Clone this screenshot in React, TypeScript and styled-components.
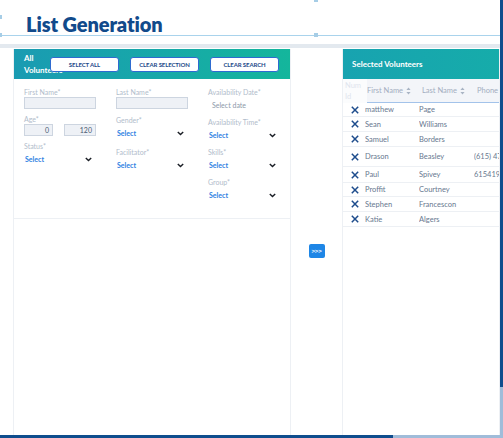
import styled, { createGlobalStyle } from 'styled-components';

const GlobalStyle = createGlobalStyle`
  html, body {
    margin: 0;
    padding: 0;
    overflow: hidden;
    background: #ffffff;
  }
  body {
    font-family: Lato, "Open Sans", sans-serif;
  }
  * {
    box-sizing: border-box;
  }
`;

type Volunteer = { first: string; last: string; phone?: string; h?: number };

const volunteers: Volunteer[] = [
  { first: 'matthew', last: 'Page', h: 14 },
  { first: 'Sean', last: 'Williams' },
  { first: 'Samuel', last: 'Borders' },
  { first: 'Drason', last: 'Beasley', phone: '(615) 477-0192', h: 20 },
  { first: 'Paul', last: 'Spivey', phone: '6154191044', h: 16 },
  { first: 'Proffit', last: 'Courtney', h: 14 },
  { first: 'Stephen', last: 'Francescon' },
  { first: 'Katie', last: 'Algers' },
];

const Chevron = () => (
  <svg width="7" height="5" viewBox="0 0 7 5">
    <path d="M0.8 0.9 L3.5 3.6 L6.2 0.9" fill="none" stroke="#1b1f26" strokeWidth="1.4" />
  </svg>
);

const SortIcon = () => (
  <svg width="5" height="8" viewBox="0 0 5 8">
    <path d="M2.5 0.5 L4.6 3 H0.4 Z M2.5 7.5 L4.6 5 H0.4 Z" fill="#a9b4c4" />
  </svg>
);

const RemoveIcon = () => (
  <svg width="8" height="8" viewBox="0 0 8 8">
    <path d="M0.8 0.8 L7.2 7.2 M7.2 0.8 L0.8 7.2" stroke="#1d4c8c" strokeWidth="1.5" />
  </svg>
);

export default function App() {
  return (
    <>
      <GlobalStyle />
      <Page>
        <TitleBar>
          <Title>List Generation</Title>
          <GuideLine />
          <Handle $x={-2} $y={15} />
          <Handle $x={-2} $y={33} />
          <Handle $x={314} $y={-2} />
          <Handle $x={314} $y={33} />
        </TitleBar>
        <Band />
        <Main>
          <span />
          <Panel>
            <PanelHeader $variant="left">
              <HeaderTitle $narrow>All Volunteers</HeaderTitle>
              <ButtonRow>
                <HeaderButton>Select all</HeaderButton>
                <HeaderButton>Clear selection</HeaderButton>
                <HeaderButton>Clear search</HeaderButton>
              </ButtonRow>
            </PanelHeader>
            <FormGrid>
              <Column $gap={5}>
                <Field>
                  <Label>First Name*</Label>
                  <TextInput />
                </Field>
                <Field>
                  <Label>Age*</Label>
                  <AgeRow>
                    <AgeInput $w={29}>0</AgeInput>
                    <AgeInput $w={32}>120</AgeInput>
                  </AgeRow>
                </Field>
                <Field>
                  <Label>Status*</Label>
                  <SelectBox>
                    <SelectText>Select</SelectText>
                    <Chevron />
                  </SelectBox>
                </Field>
              </Column>
              <Column $gap={6}>
                <Field>
                  <Label>Last Name*</Label>
                  <TextInput />
                </Field>
                <Field>
                  <Label>Gender*</Label>
                  <SelectBox>
                    <SelectText>Select</SelectText>
                    <Chevron />
                  </SelectBox>
                </Field>
                <Field>
                  <Label>Facilitator*</Label>
                  <SelectBox>
                    <SelectText>Select</SelectText>
                    <Chevron />
                  </SelectBox>
                </Field>
              </Column>
              <Column $gap={4}>
                <Field>
                  <Label>Availability Date*</Label>
                  <DateBox>Select date</DateBox>
                </Field>
                {['Availability Time*', 'Skills*', 'Group*'].map(label => (
                  <Field key={label}>
                    <Label>{label}</Label>
                    <SelectBox>
                      <SelectText>Select</SelectText>
                      <Chevron />
                    </SelectBox>
                  </Field>
                ))}
              </Column>
            </FormGrid>
          </Panel>
          <Gutter>
            <MoveButton>&gt;&gt;&gt;</MoveButton>
          </Gutter>
          <Panel>
            <PanelHeader $variant="right">
              <HeaderTitle>Selected Volunteers</HeaderTitle>
            </PanelHeader>
            <TableHead>
              <NumIdCell>
                Num
                <br />
                Id
              </NumIdCell>
              <HeadCell>
                First Name <SortIcon />
              </HeadCell>
              <HeadCell>
                Last Name <SortIcon />
              </HeadCell>
              <HeadCell>Phone</HeadCell>
            </TableHead>
            {volunteers.map(v => (
              <Row key={v.first} $h={v.h ?? 15}>
                <IconCell>
                  <RemoveIcon />
                </IconCell>
                <Cell>{v.first}</Cell>
                <Cell>{v.last}</Cell>
                <Cell>{v.phone ?? ''}</Cell>
              </Row>
            ))}
          </Panel>
        </Main>
        <VScroll />
        <HScroll />
      </Page>
    </>
  );
}

const Page = styled.div`
  position: relative;
  width: 503px;
  height: 438px;
  overflow: hidden;
  display: flex;
  flex-direction: column;
  background: #ffffff;
`;

const TitleBar = styled.header`
  position: relative;
  height: 44px;
  padding: 12px 0 0 26px;
`;

const Title = styled.h1`
  margin: 0;
  font-size: 20px;
  line-height: 24px;
  font-weight: 800;
  color: #114a8b;
  letter-spacing: -0.1px;
`;

const GuideLine = styled.div`
  position: absolute;
  left: 0;
  top: 35px;
  width: 500px;
  height: 1px;
  background: #a9d3ec;
`;

const Handle = styled.div<{ $x: number; $y: number }>`
  position: absolute;
  left: ${({ $x }) => $x}px;
  top: ${({ $y }) => $y}px;
  width: 4px;
  height: 4px;
  background: #a6cde6;
`;

const Band = styled.div`
  height: 4px;
  background: #e3e9ef;
`;

const Main = styled.div`
  flex: 1;
  display: grid;
  grid-template-columns: 13px 278px 51px 158px;
  padding-top: 1px;
`;

const Panel = styled.section`
  display: flex;
  flex-direction: column;
  border-left: 1px solid #edf0f4;
  border-right: 1px solid #edf0f4;
  overflow: hidden;
  padding-bottom: 3px;
`;

const PanelHeader = styled.div<{ $variant: 'left' | 'right' }>`
  flex: none;
  height: 30px;
  display: flex;
  align-items: center;
  padding-left: ${({ $variant }) => ($variant === 'left' ? '10px' : '9px')};
  background: ${({ $variant }) =>
    $variant === 'left'
      ? 'linear-gradient(90deg, #1a9bb2 0%, #17a9a8 55%, #14b69c 100%)'
      : 'linear-gradient(90deg, #18a3b0 0%, #16acaa 100%)'};
`;

const HeaderTitle = styled.div<{ $narrow?: boolean }>`
  width: ${({ $narrow }) => ($narrow ? '26px' : 'auto')};
  font-size: 8px;
  line-height: 12px;
  font-weight: 700;
  color: #ffffff;
  white-space: ${({ $narrow }) => ($narrow ? 'normal' : 'nowrap')};
`;

const ButtonRow = styled.div`
  display: flex;
  gap: 11px;
  position: relative;
  z-index: 1;
`;

const HeaderButton = styled.button`
  width: 69px;
  height: 15px;
  padding: 0;
  background: #ffffff;
  border: 1.5px solid #2e6bd0;
  border-radius: 3px;
  font-family: Lato, "Open Sans", sans-serif;
  font-size: 6px;
  font-weight: 700;
  text-transform: uppercase;
  color: #1c4a8a;
  letter-spacing: -0.1px;
`;

const FormGrid = styled.div`
  flex: none;
  height: 140px;
  display: grid;
  grid-template-columns: 92px 92px 1fr;
  align-items: start;
  padding: 8px 0 0 10px;
  border-bottom: 1px solid #edf0f4;
`;

const Column = styled.div<{ $gap: number }>`
  display: flex;
  flex-direction: column;
  gap: ${({ $gap }) => $gap}px;
`;

const Field = styled.div`
  display: flex;
  flex-direction: column;
`;

const Label = styled.div`
  height: 10px;
  font-size: 7px;
  line-height: 10px;
  color: #b1bccb;
`;

const TextInput = styled.div`
  width: 72px;
  height: 12px;
  background: #eef1f6;
  border: 1px solid #cdd5e0;
`;

const AgeRow = styled.div`
  display: flex;
  gap: 11px;
`;

const AgeInput = styled.div<{ $w: number }>`
  width: ${({ $w }) => $w}px;
  height: 12px;
  padding-right: 3px;
  background: #eef1f6;
  border: 1px solid #cdd5e0;
  font-size: 7px;
  line-height: 10px;
  text-align: right;
  color: #4a5a72;
`;

const SelectBox = styled.div`
  width: 68px;
  height: 16px;
  display: flex;
  align-items: center;
  justify-content: space-between;
  padding-left: 1px;
`;

const SelectText = styled.span`
  font-size: 7px;
  font-weight: 700;
  color: #2e7fe2;
`;

const DateBox = styled.div`
  height: 16px;
  padding-left: 4px;
  display: flex;
  align-items: center;
  font-size: 7px;
  color: #8d99aa;
`;

const Gutter = styled.div`
  display: flex;
  justify-content: center;
  padding-top: 195px;
`;

const MoveButton = styled.button`
  width: 16px;
  height: 14px;
  padding: 0;
  border: none;
  border-radius: 2px;
  background: #1e86e6;
  color: #ffffff;
  font-family: "Liberation Sans", Arial, sans-serif;
  font-size: 6px;
  line-height: 14px;
  font-weight: 700;
  letter-spacing: -0.2px;
`;

const TableHead = styled.div`
  flex: none;
  height: 24px;
  display: grid;
  grid-template-columns: 24px 55px 55px 1fr;
`;

const NumIdCell = styled.div`
  padding: 1px 0 0 2px;
  font-size: 7.5px;
  line-height: 11px;
  color: #dfe5ee;
  background: #fbfcfd;
`;

const HeadCell = styled.div`
  display: flex;
  align-items: center;
  gap: 3px;
  font-size: 7.5px;
  color: #a3aec0;
  white-space: nowrap;
  background: #f3f5f9;
  border-bottom: 1.5px solid #a3c3ea;
`;

const Row = styled.div<{ $h: number }>`
  flex: none;
  height: ${({ $h }) => $h}px;
  display: grid;
  grid-template-columns: 22px 54px 55px 1fr;
  align-items: center;
  border-bottom: 1px solid #edf0f4;
`;

const IconCell = styled.div`
  display: flex;
  justify-content: center;
  padding-left: 1px;
`;

const Cell = styled.div`
  font-size: 7.5px;
  color: #68788f;
  white-space: nowrap;
  overflow: hidden;
`;

const VScroll = styled.div`
  position: absolute;
  right: 0;
  top: 0;
  width: 3px;
  height: 435px;
  background: linear-gradient(180deg, #0f4d8d 0, #0f4d8d 387px, #a0bcd9 387px);
`;

const HScroll = styled.div`
  position: absolute;
  left: 0;
  bottom: 0;
  width: 503px;
  height: 3px;
  background: linear-gradient(90deg, #0f4d8d 0, #0f4d8d 393px, #a0bcd9 393px);
`;
